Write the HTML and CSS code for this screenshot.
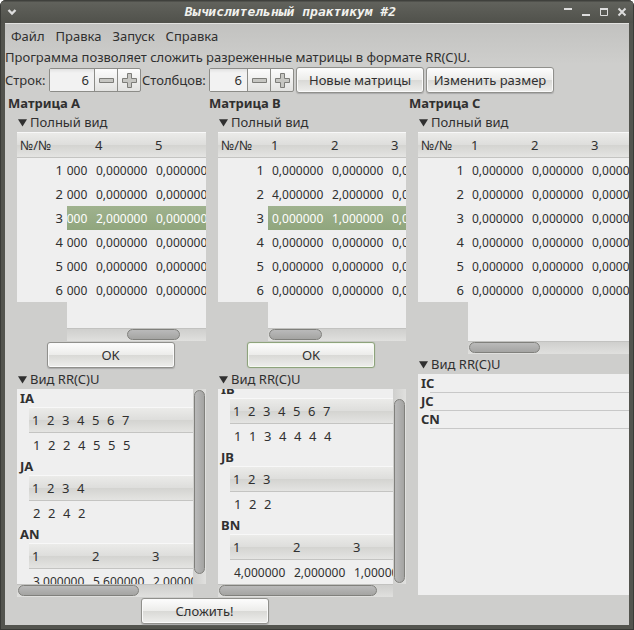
FILE: index.html
```html
<!DOCTYPE html>
<html lang="ru">
<head>
<meta charset="utf-8">
<title>Вычислительный практикум #2</title>
<link rel="stylesheet" href="styles.css">
</head>
<body>
<div class="window">
  <header class="titlebar">
    <button class="wm" aria-label="Меню окна"><svg width="12" height="12" viewBox="0 0 12 12"><path d="M2.5 4l3.5 3.5L9.500 4" fill="none" stroke="#ddd" stroke-width="2.400"/></svg></button>
    <h1>Вычислительный практикум #2</h1>
    <div class="wm-group">
      <button class="wm" aria-label="Свернуть в заголовок"><svg width="12" height="12" viewBox="0 0 12 12"><path d="M1 3h8" stroke="#ddd" stroke-width="2"/></svg></button>
      <button class="wm" aria-label="Свернуть"><svg width="12" height="12" viewBox="0 0 12 12"><path d="M1 9h8" stroke="#ddd" stroke-width="2"/></svg></button>
      <button class="wm" aria-label="Развернуть"><svg width="12" height="12" viewBox="0 0 12 12"><path d="M1.500 3v6.500h7V3" fill="none" stroke="#ddd"/><path d="M1 3h8" stroke="#ddd" stroke-width="2"/></svg></button>
      <button class="wm" aria-label="Закрыть"><svg width="12" height="12" viewBox="0 0 12 12"><path d="M1.500 2.500l7 7M8.500 2.500l-7 7" stroke="#ddd" stroke-width="2"/></svg></button>
    </div>
  </header>
  <div class="client">
    <nav class="menubar">
      <button>Файл</button><button>Правка</button><button>Запуск</button><button>Справка</button>
    </nav>
    <p class="about">Программа позволяет сложить разреженные матрицы в формате RR(C)U.</p>
    <div class="toolbar">
      <label class="rows-label" for="rows">Строк:</label>
      <div class="spin spin-wide">
        <input id="rows" type="text" value="6">
        <button aria-label="Меньше"><svg width="15" height="15" viewBox="0 0 15 15"><path class="sign" d="M.5 5.500h14v4H.5z"/></svg></button>
        <button aria-label="Больше"><svg width="15" height="15" viewBox="0 0 15 15"><path class="sign" d="M5.500.5h4v5h5v4h-5v5h-4v-5h-5v-4h5z"/></svg></button>
      </div>
      <label class="cols-label" for="cols">Столбцов:</label>
      <div class="spin">
        <input id="cols" type="text" value="6">
        <button aria-label="Меньше"><svg width="15" height="15" viewBox="0 0 15 15"><path class="sign" d="M.5 5.500h14v4H.5z"/></svg></button>
        <button aria-label="Больше"><svg width="15" height="15" viewBox="0 0 15 15"><path class="sign" d="M5.500.5h4v5h5v4h-5v5h-4v-5h-5v-4h5z"/></svg></button>
      </div>
      <button class="button">Новые матрицы</button>
      <button class="button">Изменить размер</button>
    </div>
    <main class="matrices">
      <section class="matrix">
        <h2>Матрица A</h2>
        <button class="expander">Полный вид</button>
        <div class="full">
          <table class="grid index"><thead><tr><th>№/№</th></tr></thead><tbody>
            <tr><td>1</td></tr><tr><td>2</td></tr><tr><td>3</td></tr><tr><td>4</td></tr><tr><td>5</td></tr><tr><td>6</td></tr>
          </tbody></table>
          <div class="values">
            <div class="view" data-left="35">
              <table class="grid"><thead><tr><th></th><th>4</th><th>5</th></tr></thead><tbody>
                <tr><td>0,000000</td><td>0,000000</td><td>0,000000</td></tr>
                <tr><td>0,000000</td><td>0,000000</td><td>0,000000</td></tr>
                <tr class="selected"><td>0,000000</td><td>2,000000</td><td>0,000000</td></tr>
                <tr><td>0,000000</td><td>0,000000</td><td>0,000000</td></tr>
                <tr><td>0,000000</td><td>0,000000</td><td>0,000000</td></tr>
                <tr><td>0,000000</td><td>0,000000</td><td>0,000000</td></tr>
              </tbody></table>
            </div>
            <div class="track"><div class="thumb" style="left:43%;width:38%"></div></div>
          </div>
        </div>
        <button class="button ok">OK</button>
        <button class="expander">Вид RR(C)U</button>
        <div class="packed">
          <div class="view">
            <h3>IA</h3>
            <table class="grid short"><thead><tr><th>1</th><th>2</th><th>3</th><th>4</th><th>5</th><th>6</th><th>7</th><th></th></tr></thead><tbody><tr><td>1</td><td>2</td><td>2</td><td>4</td><td>5</td><td>5</td><td>5</td><td></td></tr></tbody></table>
            <h3>JA</h3>
            <table class="grid short"><thead><tr><th>1</th><th>2</th><th>3</th><th>4</th><th></th></tr></thead><tbody><tr><td>2</td><td>2</td><td>4</td><td>2</td><td></td></tr></tbody></table>
            <h3>AN</h3>
            <table class="grid"><thead><tr><th>1</th><th>2</th><th>3</th></tr></thead><tbody><tr><td>3,000000</td><td>5,600000</td><td>2,000000</td></tr></tbody></table>
          </div>
          <div class="track vertical"><div class="thumb" style="top:0.500%;height:94.500%"></div></div>
          <div class="track"><div class="thumb" style="left:0.600%;width:69%"></div></div>
        </div>
      </section>

      <section class="matrix">
        <h2>Матрица B</h2>
        <button class="expander">Полный вид</button>
        <div class="full">
          <table class="grid index"><thead><tr><th>№/№</th></tr></thead><tbody>
            <tr><td>1</td></tr><tr><td>2</td></tr><tr><td>3</td></tr><tr><td>4</td></tr><tr><td>5</td></tr><tr><td>6</td></tr>
          </tbody></table>
          <div class="values">
            <div class="view">
              <table class="grid"><thead><tr><th>1</th><th>2</th><th>3</th></tr></thead><tbody>
                <tr><td>0,000000</td><td>0,000000</td><td>0,000000</td></tr>
                <tr><td>4,000000</td><td>2,000000</td><td>0,000000</td></tr>
                <tr class="selected"><td>0,000000</td><td>1,000000</td><td>0,000000</td></tr>
                <tr><td>0,000000</td><td>0,000000</td><td>0,000000</td></tr>
                <tr><td>0,000000</td><td>0,000000</td><td>0,000000</td></tr>
                <tr><td>0,000000</td><td>0,000000</td><td>0,000000</td></tr>
              </tbody></table>
            </div>
            <div class="track"><div class="thumb" style="left:0.800%;width:38%"></div></div>
          </div>
        </div>
        <button class="button ok focused">OK</button>
        <button class="expander">Вид RR(C)U</button>
        <div class="packed">
          <div class="view" data-top="9">
            <h3>IB</h3>
            <table class="grid short"><thead><tr><th>1</th><th>2</th><th>3</th><th>4</th><th>5</th><th>6</th><th>7</th><th></th></tr></thead><tbody><tr><td>1</td><td>1</td><td>3</td><td>4</td><td>4</td><td>4</td><td>4</td><td></td></tr></tbody></table>
            <h3>JB</h3>
            <table class="grid short"><thead><tr><th>1</th><th>2</th><th>3</th><th></th></tr></thead><tbody><tr><td>1</td><td>2</td><td>2</td><td></td></tr></tbody></table>
            <h3>BN</h3>
            <table class="grid"><thead><tr><th>1</th><th>2</th><th>3</th></tr></thead><tbody><tr><td>4,000000</td><td>2,000000</td><td>1,000000</td></tr></tbody></table>
          </div>
          <div class="track vertical"><div class="thumb" style="top:5%;height:94.500%"></div></div>
          <div class="track"><div class="thumb" style="left:0.600%;width:90%"></div></div>
        </div>
      </section>

      <section class="matrix result">
        <h2>Матрица C</h2>
        <button class="expander">Полный вид</button>
        <div class="full tall">
          <table class="grid index"><thead><tr><th>№/№</th></tr></thead><tbody>
            <tr><td>1</td></tr><tr><td>2</td></tr><tr><td>3</td></tr><tr><td>4</td></tr><tr><td>5</td></tr><tr><td>6</td></tr>
          </tbody></table>
          <div class="values">
            <div class="view">
              <table class="grid"><thead><tr><th>1</th><th>2</th><th>3</th></tr></thead><tbody>
                <tr><td>0,000000</td><td>0,000000</td><td>0,000000</td></tr>
                <tr><td>0,000000</td><td>0,000000</td><td>0,000000</td></tr>
                <tr><td>0,000000</td><td>0,000000</td><td>0,000000</td></tr>
                <tr><td>0,000000</td><td>0,000000</td><td>0,000000</td></tr>
                <tr><td>0,000000</td><td>0,000000</td><td>0,000000</td></tr>
                <tr><td>0,000000</td><td>0,000000</td><td>0,000000</td></tr>
              </tbody></table>
            </div>
            <div class="track"><div class="thumb" style="left:0.600%;width:44%"></div></div>
          </div>
        </div>
        <button class="expander">Вид RR(C)U</button>
        <div class="empty">
          <h3>IC</h3><hr>
          <h3>JC</h3><hr>
          <h3>CN</h3><hr>
        </div>
      </section>

      <button class="button sum">Сложить!</button>
    </main>
  </div>
</div>
<script src="script.js"></script>
</body>
</html>
```
FILE: styles.css
```css
* { box-sizing: border-box; }
body {
  margin: 0;
  background: #fff;
  color: #303030;
  font: 13px/18px "Noto Sans", "Open Sans", sans-serif;
}
h1, h2, h3, p { margin: 0; font-size: inherit; }
button, input { font: inherit; color: inherit; margin: 0; }
button { border: 0; padding: 0; background: none; }

.window {
  display: flex;
  flex-direction: column;
  height: 100vh;
  padding: 0 5px 5px;
  background: #53544e;
  border-radius: 6px 6px 0 0;
  box-shadow: inset 1px 1px 0 #393a36, inset -1px -1px 0 #393a36;
  overflow: hidden;
}
.titlebar {
  display: flex;
  align-items: center;
  flex: none;
  height: 23px;
  margin: 0 -4px;
  padding: 0 4px 0 5px;
  background: linear-gradient(#3f403c 1px, #61625c 2px, #50514b);
}
.titlebar h1 {
  flex: 1;
  text-align: center;
  color: #f2f2ee;
  font: italic bold 13px/18px "DejaVu Sans Mono", monospace;
}
.wm { display: block; width: 12px; height: 12px; }
.wm svg, .spin svg { display: block; }
.wm-group { display: flex; gap: 6px; }

.client {
  display: flex;
  flex-direction: column;
  flex: 1;
  min-height: 0;
  border-top: 1px solid #e2e2e0;
  background: linear-gradient(#c2c2c0, #cececc 40px);
}
.menubar {
  display: flex;
  flex: none;
  gap: 11px;
  height: 24px;
  padding: 0 6px;
}
.about { flex: none; white-space: nowrap; }

.toolbar { display: flex; align-items: center; flex: none; height: 28px; }
.rows-label { width: 44px; }
.cols-label { width: 67px; margin-left: 1px; }
.spin {
  display: flex;
  width: 85px;
  height: 24px;
  border: 1px solid #8c8c88;
  border-radius: 2px;
  background: linear-gradient(#fcfcfc, #e2e2e0);
}
.spin-wide { width: 92px; }
.spin input {
  flex: 1;
  width: 0;
  padding: 0 5px 0 0;
  border: 0;
  background: linear-gradient(#e2e2e2, #f2f2f2 4px);
  text-align: right;
}
.spin button {
  display: grid;
  place-items: center;
  width: 23px;
  border-left: 1px solid #8c8c88;
}
.sign { fill: #c6c6c2; stroke: #7c7c78; }
.button {
  width: 128px;
  height: 26px;
  border: 1px solid #90908c;
  border-radius: 3px;
  background: linear-gradient(#fdfdfd, #ececea 50%, #d9d9d6 51%, #eeeeec);
  box-shadow: inset 0 0 0 1px #fafafa, 0 1px 1px #aaa;
  white-space: nowrap;
}
.toolbar .button { margin-left: 2px; }

.matrices {
  display: grid;
  grid-template-columns: 201fr 200fr 223fr;
  grid-template-rows: minmax(0, 1fr) auto;
  flex: 1;
  min-height: 0;
}
.matrix {
  display: flex;
  flex-direction: column;
  min-width: 0;
  min-height: 0;
  padding-left: 12px;
}
.result { grid-row: span 2; padding-bottom: 30px; }
.matrix h2 { flex: none; height: 18px; margin-left: -9px; }
.expander {
  display: flex;
  align-items: center;
  flex: none;
  gap: 3px;
  height: 20px;
}
.expander::before {
  content: "";
  width: 10px;
  height: 9px;
  background: #303030;
  clip-path: polygon(10% 20%, 100% 20%, 55% 100%);
}

.full { display: flex; align-items: flex-start; flex: none; height: 209px; }
.full.tall { height: 222px; }
.values {
  display: flex;
  flex-direction: column;
  flex: 1;
  align-self: stretch;
  min-width: 0;
}
.view { flex: 1; min-width: 0; min-height: 0; overflow: hidden; background: #efefef; }
.grid { border-collapse: separate; border-spacing: 0; table-layout: fixed; width: 0; }
.grid th, .grid td {
  width: 60px;
  height: 24px;
  padding: 0 0 0 4px;
  text-align: left;
  font-weight: normal;
  white-space: nowrap;
}
.grid td { padding-top: 2px; font-size: 12px; }
.grid th {
  height: 26px;
  padding-left: 3px;
  border-top: 1px solid #f8f8f8;
  border-bottom: 1px solid #c4c4c2;
  background: linear-gradient(#ebebe9, #dededc 48%, #d4d4d1 52%, #e4e4e2);
}
.grid.index { flex: none; background: #efefef; }
.grid.index th, .grid.index td { width: 50px; }
.grid.index td, .grid.short td { padding-top: 0; font-size: 13px; }
.grid.index td { padding: 0 4px 0 0; text-align: right; }
.selected td { background: linear-gradient(#9fb28e, #90a67d); color: #fff; }

.track {
  position: relative;
  flex: none;
  height: 13px;
  border-top: 1px solid #c2c2c0;
  background: linear-gradient(#cfcfcd, #e0e0de);
}
.thumb {
  position: absolute;
  top: 0;
  height: 11px;
  border: 1px solid #80807c;
  border-radius: 6px;
  background: linear-gradient(#bababa, #a4a4a2);
}
.vertical { border: 0; height: auto; background: linear-gradient(90deg, #cfcfcd, #e0e0de); }
.vertical .thumb { left: 1px; width: 11px; background: linear-gradient(90deg, #bababa, #a4a4a2); }

.ok { flex: none; align-self: center; margin: 1px 2px 1px 0; }
.focused { border-color: #8ea37c; box-shadow: inset 0 0 0 1px #f4f8f0, 0 0 1px #8ea37c; }

.packed {
  display: grid;
  grid-template-columns: minmax(0, 1fr) 13px;
  grid-template-rows: minmax(0, 1fr) 13px;
  flex: 1;
  min-height: 0;
}
h3 { height: 18px; padding-left: 3px; }
.packed .grid { margin-left: 12px; }
.short { min-width: 100%; }
.short th, .short td { width: 15px; }
.short th:last-child, .short td:last-child { width: auto; }
.empty { flex: 1; background: #efefef; }
.empty h3 { height: 18px; }
.empty hr { height: 1px; margin: 0 0 -1px 12px; border: 0; background: #c8c8c8; }

.sum { grid-column: 1 / 3; grid-row: 2; justify-self: center; margin: 1px 2px 1px 0; }
```
FILE: script.js
```js
document.querySelectorAll('.view').forEach(function (view) {
  view.scrollLeft = Number(view.dataset.left || 0);
  view.scrollTop = Number(view.dataset.top || 0);
});
```
